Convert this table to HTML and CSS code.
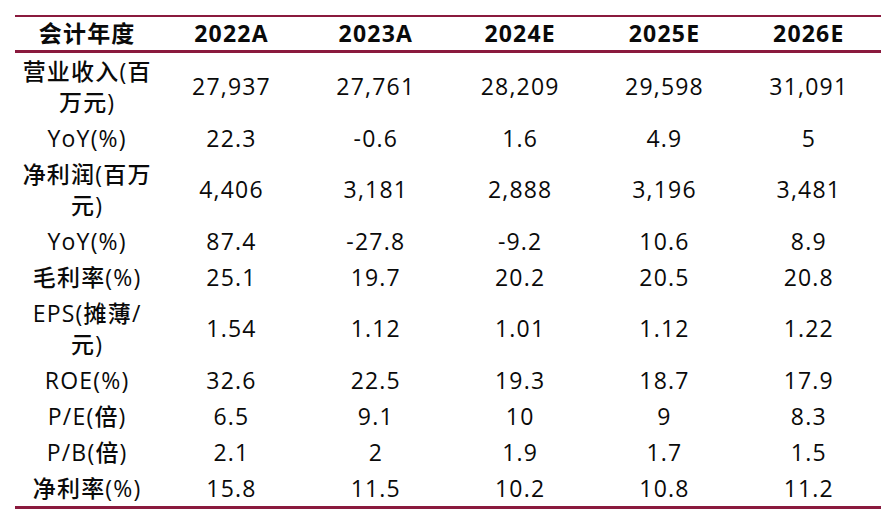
FILE: index.html
```html
<!DOCTYPE html>
<html lang="zh-CN">
<head>
<meta charset="utf-8">
<title>财务预测</title>
<link rel="stylesheet" href="styles.css">
</head>
<body>
<div class="fin">
  <div class="row head">
    <div class="cell">会计年度</div><div class="cell">2022A</div><div class="cell">2023A</div><div class="cell">2024E</div><div class="cell">2025E</div><div class="cell">2026E</div>
  </div>
  <div class="row double"><div class="cell">营业收入(百<br>万元)</div><div class="cell">27,937</div><div class="cell">27,761</div><div class="cell">28,209</div><div class="cell">29,598</div><div class="cell">31,091</div></div>
  <div class="row single"><div class="cell">YoY(%)</div><div class="cell">22.3</div><div class="cell">-0.6</div><div class="cell">1.6</div><div class="cell">4.9</div><div class="cell">5</div></div>
  <div class="row double"><div class="cell">净利润(百万<br>元)</div><div class="cell">4,406</div><div class="cell">3,181</div><div class="cell">2,888</div><div class="cell">3,196</div><div class="cell">3,481</div></div>
  <div class="row single"><div class="cell">YoY(%)</div><div class="cell">87.4</div><div class="cell">-27.8</div><div class="cell">-9.2</div><div class="cell">10.6</div><div class="cell">8.9</div></div>
  <div class="row single"><div class="cell">毛利率(%)</div><div class="cell">25.1</div><div class="cell">19.7</div><div class="cell">20.2</div><div class="cell">20.5</div><div class="cell">20.8</div></div>
  <div class="row double"><div class="cell">EPS(摊薄/<br>元)</div><div class="cell">1.54</div><div class="cell">1.12</div><div class="cell">1.01</div><div class="cell">1.12</div><div class="cell">1.22</div></div>
  <div class="row single"><div class="cell">ROE(%)</div><div class="cell">32.6</div><div class="cell">22.5</div><div class="cell">19.3</div><div class="cell">18.7</div><div class="cell">17.9</div></div>
  <div class="row single"><div class="cell">P/E(倍)</div><div class="cell">6.5</div><div class="cell">9.1</div><div class="cell">10</div><div class="cell">9</div><div class="cell">8.3</div></div>
  <div class="row single"><div class="cell">P/B(倍)</div><div class="cell">2.1</div><div class="cell">2</div><div class="cell">1.9</div><div class="cell">1.7</div><div class="cell">1.5</div></div>
  <div class="row single"><div class="cell">净利率(%)</div><div class="cell">15.8</div><div class="cell">11.5</div><div class="cell">10.2</div><div class="cell">10.8</div><div class="cell">11.2</div></div>
</div>
</body>
</html>
```
FILE: styles.css
```css
html, body {
  margin: 0;
  padding: 0;
  background: #ffffff;
}

body {
  padding: 15px 0 0 15px;
  font-family: "Open Sans", "Noto Sans CJK SC", sans-serif;
  color: #0a0a0a;
}

.fin {
  width: 866px;
  border-top: 2px solid #8a1a3e;
  border-bottom: 3px solid #8a1a3e;
}

.row {
  display: grid;
  grid-template-columns: repeat(6, 1fr);
  align-items: center;
}

.cell {
  text-align: center;
  font-size: 23px;
  font-weight: 500;
  line-height: 31px;
  letter-spacing: 1.2px;
  white-space: nowrap;
}

.head {
  height: 33px;
  border-bottom: 3px solid #8a1a3e;
}

.head .cell {
  font-weight: 700;
}

.single {
  height: 36px;
}

.double {
  height: 67px;
}
```
